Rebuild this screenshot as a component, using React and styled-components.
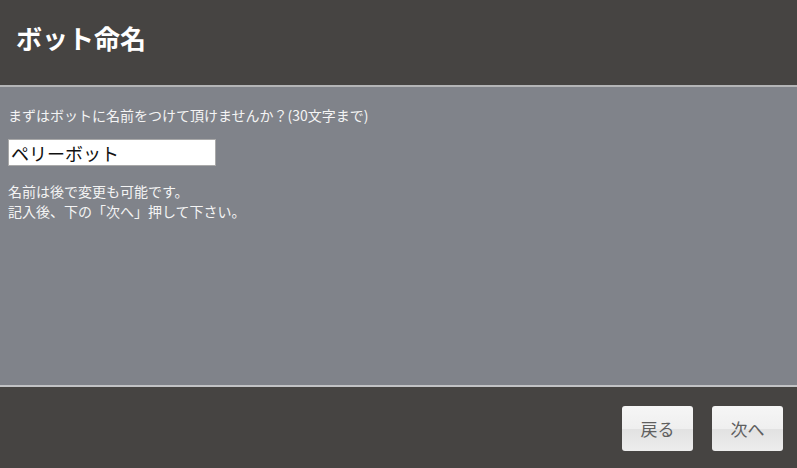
import { createGlobalStyle } from 'styled-components';
import styled from 'styled-components';

const Global = createGlobalStyle`
  html, body { margin: 0; padding: 0; background: #464442; }
  body { font-family: "Noto Sans CJK JP", "Noto Sans", sans-serif; }
`;

const Page = styled.div`
  width: 797px;
  height: 468px;
  display: flex;
  flex-direction: column;
  background: #464442;
`;

const Header = styled.header`
  height: 87px;
  display: flex;
  align-items: center;
  padding: 0 16px;
  box-sizing: border-box;
  border-bottom: 2px solid #b4b5b7;
`;

const Title = styled.h1`
  margin: 0;
  margin-top: -10px;
  color: #ffffff;
  font-size: 26px;
  font-weight: 700;
`;

const Body = styled.main`
  height: 300px;
  box-sizing: border-box;
  background: #80838a;
  border-bottom: 2px solid #c2c3c5;
  padding: 18px 8px 0;
  color: #f4f4f4;
  font-size: 14px;
`;

const Line = styled.p`
  margin: 0;
  line-height: 20px;
`;

const NameInput = styled.input`
  display: block;
  margin: 14px 0 15px;
  width: 208px;
  height: 27px;
  box-sizing: border-box;
  border: 1px solid #a9a9a9;
  background: #fff;
  padding: 0 2px;
  font-family: "Noto Sans CJK JP", sans-serif;
  font-size: 18px;
  color: #111;
  outline: none;
`;

const Footer = styled.footer`
  flex: 1;
  display: flex;
  justify-content: flex-end;
  align-items: flex-start;
  gap: 19px;
  padding: 19px 14px 0 0;
`;

const Button = styled.button`
  width: 71px;
  height: 45px;
  border: none;
  border-radius: 3px;
  background: linear-gradient(#f6f6f6 0%, #efefef 50%, #e2e2e2 52%, #ededed 100%);
  color: #5f5f5f;
  font-family: "Noto Sans CJK JP", sans-serif;
  font-size: 17px;
  cursor: pointer;
`;

export default function App() {
  return (
    <>
      <Global />
      <Page>
        <Header>
          <Title>ボット命名</Title>
        </Header>
        <Body>
          <Line>まずはボットに名前をつけて頂けませんか？(30文字まで)</Line>
          <NameInput defaultValue="ペリーボット" />
          <Line>名前は後で変更も可能です。</Line>
          <Line>記入後、下の「次へ」押して下さい。</Line>
        </Body>
        <Footer>
          <Button>戻る</Button>
          <Button>次へ</Button>
        </Footer>
      </Page>
    </>
  );
}
